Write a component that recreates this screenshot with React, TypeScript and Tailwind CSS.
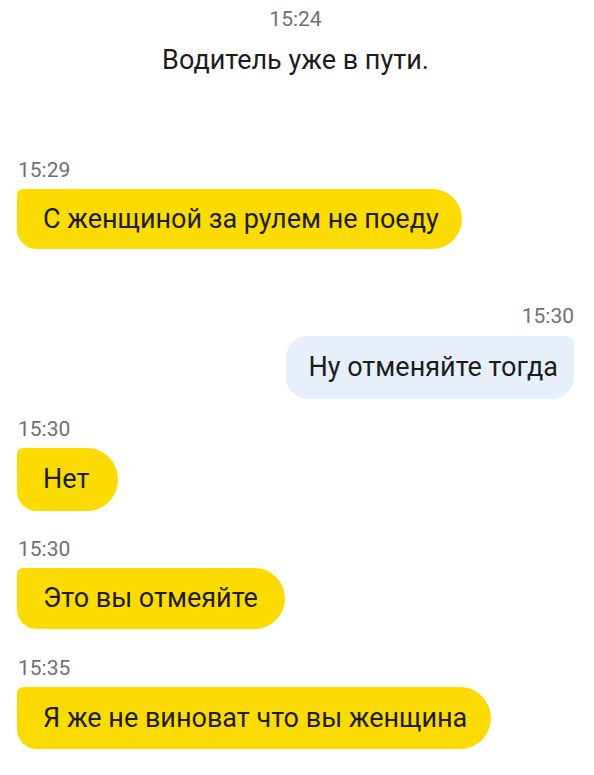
const messages = [
  { id: 1, time: '15:29', text: 'С женщиной за рулем не поеду', out: false, gap: 'mt-[82px]', h: 'h-[60px]', pr: 'pr-[23px]' },
  { id: 2, time: '15:30', text: 'Ну отменяйте тогда', out: true, gap: 'mt-[55px]', h: 'h-[63px]', pr: 'pr-[16px]' },
  { id: 3, time: '15:30', text: 'Нет', out: false, gap: 'mt-[18px]', h: 'h-[63px]', pr: 'pr-[29px]' },
  { id: 4, time: '15:30', text: 'Это вы отмеяйте', out: false, gap: 'mt-[26px]', h: 'h-[61px]', pr: 'pr-[27px]' },
  { id: 5, time: '15:35', text: 'Я же не виноват что вы женщина', out: false, gap: 'mt-[27px]', h: 'h-[62px]', pr: 'pr-[24px]' },
];

const App = () => {
  return (
    <div className="min-h-screen bg-white font-['Roboto','Liberation_Sans',sans-serif] text-[#1c1c1c]">
      <div className="flex flex-col pt-[7px] pb-6 pl-[17px] pr-[20px]">
        {/* системное сообщение */}
        <div className="text-center text-[21px] leading-[24px] text-[#707070]">15:24</div>
        <div className="mt-[13px] text-center text-[27px] leading-[32px]">Водитель уже в пути.</div>

        {messages.map((m) => (
          <div key={m.id} className={`flex flex-col ${m.gap} ${m.out ? 'items-end' : 'items-start'}`}>
            <div className={`text-[21px] leading-[24px] text-[#707070] ${m.out ? '' : 'pl-px'}`}>{m.time}</div>
            <div
              className={
                m.out
                  ? `mt-[8px] flex items-center ${m.h} ${m.pr} bg-[#e6effa] pl-[22px] text-[27px] rounded-[22px] rounded-tr-[8px]`
                  : `mt-[7px] flex items-center ${m.h} ${m.pr} bg-[#fcdb00] pl-[26px] text-[27px] rounded-l-[20px] rounded-r-[31px] rounded-tl-[6px]`
              }
            >
              {m.text}
            </div>
          </div>
        ))}
      </div>
    </div>
  );
};

export default App;
